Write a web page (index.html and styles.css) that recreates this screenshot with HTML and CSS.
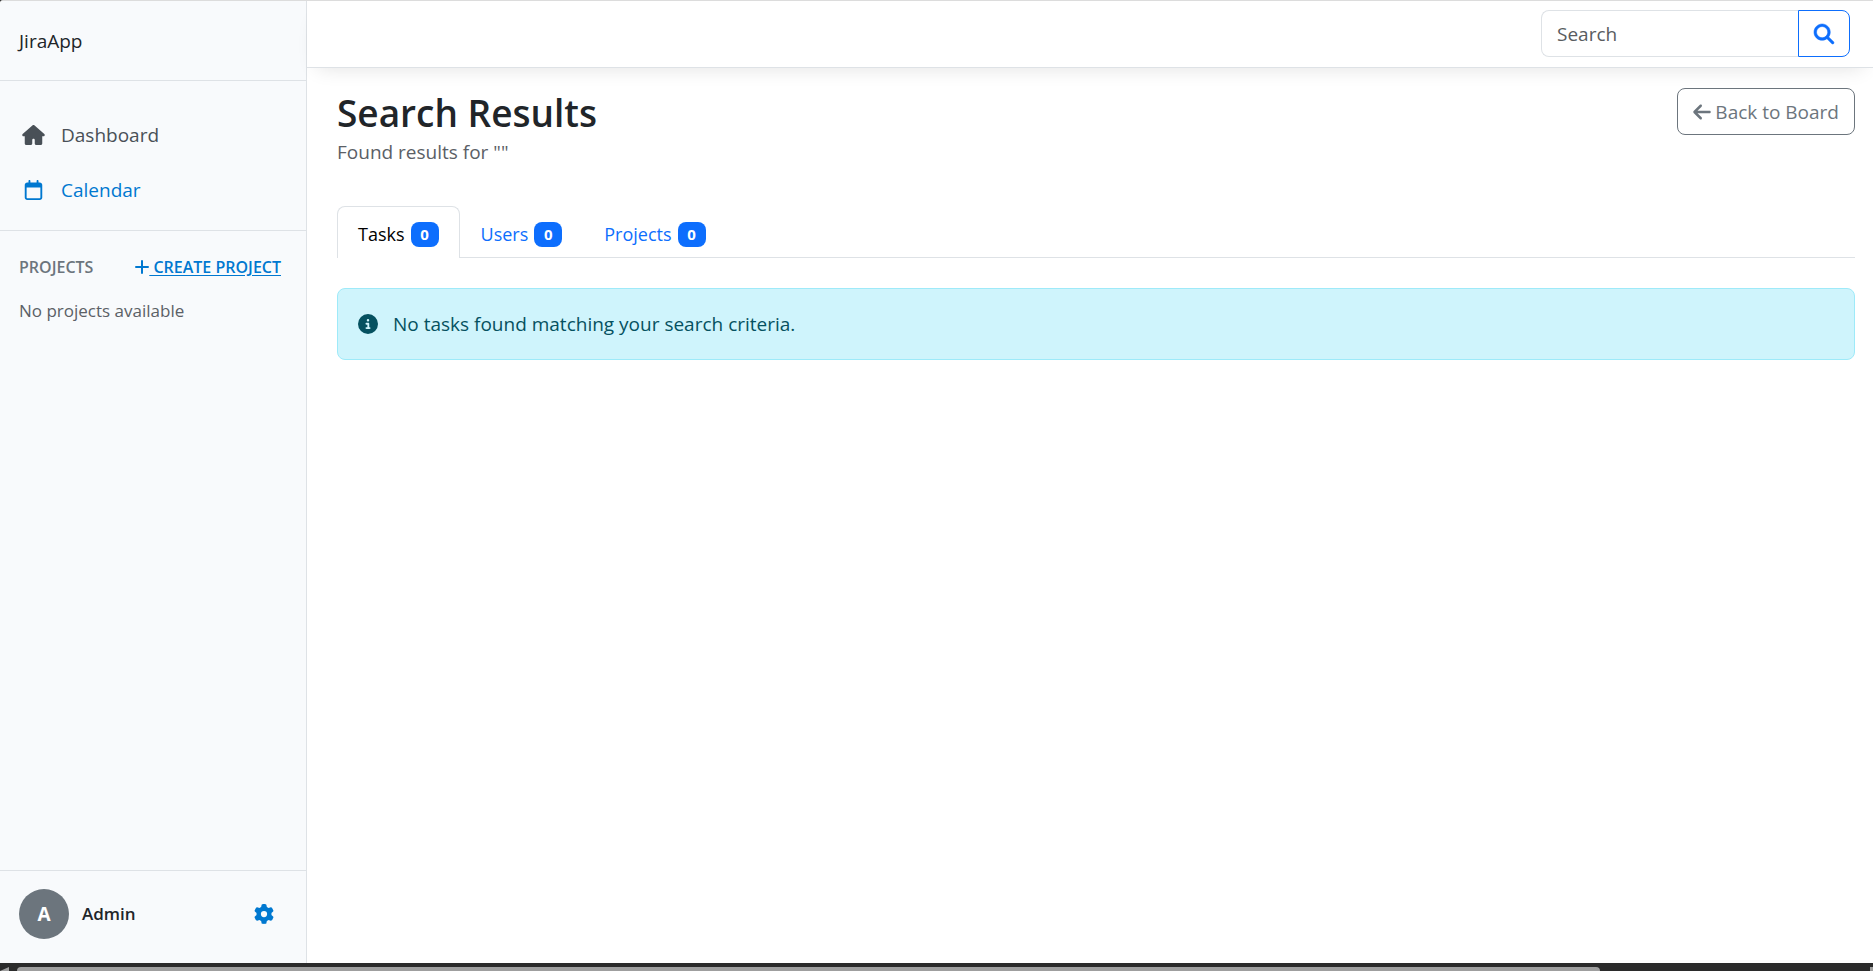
FILE: index.html
```html
<!DOCTYPE html>
<html lang="en">
<head>
<meta charset="utf-8">
<title>Search Results - JiraApp</title>
<link rel="stylesheet" href="styles.css">
</head>
<body>
<div class="app">
  <aside class="sidebar">
    <div class="brand">JiraApp</div>
    <nav class="nav">
      <a class="nav-link" href="#">
        <svg class="nav-icon" viewBox="0 0 576 512"><path d="M575.8 255.5c0 18-15 32.1-32 32.1h-32l.7 160.2c0 2.700-.2 5.400-.5 8.100V472c0 22.100-17.900 40-40 40H360c-22.100 0-40-17.900-40-40v-88c0-17.700-14.300-32-32-32s-32 14.300-32 32v88c0 22.100-17.900 40-40 40H104c-22.100 0-40-17.900-40-40V287.600H32c-18 0-32-14-32-32.100 0-9 3-17 10-24L266.400 8c7-7 15-8 22-8s15 2 21 7l255.400 224.500c8 7 12 15 11 24z"/></svg>
        Dashboard
      </a>
      <a class="nav-link active" href="#">
        <svg class="nav-icon" viewBox="0 0 576 512"><path d="M184 0c13.300 0 24 10.700 24 24v40h160V24c0-13.300 10.700-24 24-24s24 10.700 24 24v40h32c35.300 0 64 28.700 64 64v320c0 35.300-28.700 64-64 64H128c-35.300 0-64-28.700-64-64V128c0-35.300 28.700-64 64-64h32V24c0-13.300 10.700-24 24-24zM112 192v256c0 8.800 7.200 16 16 16h320c8.800 0 16-7.200 16-16V192H112z"/></svg>
        Calendar
      </a>
    </nav>
    <section class="projects">
      <div class="projects-head">
        <h2 class="projects-title">PROJECTS</h2>
        <a class="create" href="#"><svg class="plus" viewBox="0 0 14 14"><path d="M7 1v12M1 7h12"/></svg><span class="create-text">&nbsp;CREATE PROJECT</span></a>
      </div>
      <p class="empty">No projects available</p>
    </section>
    <footer class="account">
      <span class="avatar">A</span>
      <span class="account-name">Admin</span>
      <button class="settings" type="button" aria-label="Settings">
        <svg class="icon" viewBox="0 0 512 512"><path d="M495.900 166.600c3.200 8.700.5 18.400-6.400 24.600l-43.300 39.400c1.100 8.300 1.700 16.800 1.700 25.400s-.6 17.100-1.700 25.400l43.300 39.400c6.900 6.200 9.600 15.900 6.400 24.600-4.400 11.900-9.700 23.300-15.800 34.300l-4.700 8.100c-6.600 11-14 21.400-22.100 31.200-5.900 7.200-15.700 9.600-24.500 6.800l-55.700-17.700c-13.400 10.300-28.200 18.900-44 25.400l-12.500 57.100c-2 9.100-9 16.300-18.200 17.800-13.800 2.300-28 3.500-42.500 3.500s-28.700-1.200-42.500-3.500c-9.200-1.500-16.200-8.700-18.200-17.800l-12.500-57.100c-15.800-6.500-30.600-15.100-44-25.400l-55.600 17.800c-8.800 2.800-18.600.3-24.500-6.800-8.100-9.800-15.500-20.200-22.100-31.200l-4.700-8.100c-6.100-11-11.400-22.400-15.800-34.300-3.200-8.700-.5-18.400 6.400-24.600l43.300-39.400C64.600 273.100 64 264.600 64 256s.6-17.100 1.700-25.400l-43.300-39.400c-6.900-6.200-9.600-15.900-6.400-24.600 4.400-11.900 9.700-23.300 15.800-34.300l4.700-8.100c6.600-11 14-21.400 22.100-31.200 5.900-7.200 15.700-9.600 24.500-6.800l55.700 17.700c13.400-10.300 28.200-18.900 44-25.400l12.500-57.100c2-9.100 9-16.300 18.200-17.800C227.300 1.200 241.500 0 256 0s28.700 1.200 42.500 3.500c9.200 1.500 16.200 8.700 18.200 17.800l12.500 57.100c15.800 6.500 30.600 15.100 44 25.400l55.700-17.700c8.800-2.800 18.600-.3 24.500 6.800 8.100 9.800 15.500 20.200 22.100 31.200l4.700 8.100c6.100 11 11.400 22.400 15.800 34.300zM256 336a80 80 0 1 0 0-160 80 80 0 1 0 0 160z"/></svg>
      </button>
    </footer>
  </aside>
  <div class="page">
    <header class="topbar">
      <form class="search">
        <input class="search-input" type="search" placeholder="Search" aria-label="Search">
        <button class="search-button" type="button" aria-label="Submit search">
          <svg class="icon" viewBox="0 0 512 512"><path stroke="currentColor" stroke-width="14" d="M416 208c0 45.900-14.900 88.300-40 122.700l126.600 126.700c12.500 12.500 12.500 32.800 0 45.300s-32.800 12.500-45.300 0L330.700 376c-34.400 25.200-76.800 40-122.700 40C93.100 416 0 322.900 0 208S93.100 0 208 0s208 93.100 208 208zM208 352a144 144 0 1 0 0-288 144 144 0 1 0 0 288z"/></svg>
        </button>
      </form>
    </header>
    <main class="content">
      <div class="heading">
        <div>
          <h1 class="title">Search Results</h1>
          <p class="subtitle">Found results for ""</p>
        </div>
        <a class="back" href="#"><svg class="back-icon" viewBox="0 0 448 512"><path d="M9.400 233.400c-12.500 12.500-12.500 32.800 0 45.300l160 160c12.500 12.500 32.800 12.500 45.300 0s12.500-32.800 0-45.300L109.200 288H416c17.700 0 32-14.300 32-32s-14.300-32-32-32H109.300l105.300-105.400c12.500-12.500 12.500-32.800 0-45.300s-32.800-12.500-45.300 0l-160 160z"/></svg>Back to Board</a>
      </div>
      <div class="tabs" role="tablist">
        <button class="tab selected" type="button" role="tab" aria-selected="true">Tasks<span class="badge">0</span></button>
        <button class="tab" type="button" role="tab" aria-selected="false">Users<span class="badge">0</span></button>
        <button class="tab" type="button" role="tab" aria-selected="false">Projects<span class="badge">0</span></button>
      </div>
      <div class="alert" role="alert">
        <svg class="icon" viewBox="0 0 512 512"><path d="M256 512a256 256 0 1 0 0-512 256 256 0 1 0 0 512zM216 336h24v-64h-24c-13.300 0-24-10.700-24-24s10.700-24 24-24h48c13.300 0 24 10.700 24 24v88h8c13.300 0 24 10.700 24 24s-10.700 24-24 24h-80c-13.300 0-24-10.700-24-24s10.700-24 24-24zm40-208a32 32 0 1 1 0 64 32 32 0 1 1 0-64z"/></svg>
        No tasks found matching your search criteria.
      </div>
    </main>
  </div>
</div>
<div class="scrollbar"><span class="scroll-arrow"></span><span class="scroll-thumb"></span><span class="scroll-end"></span></div>
</body>
</html>
```
FILE: styles.css
```css
* { box-sizing: border-box; }

body {
  margin: 0;
  height: 100vh;
  display: flex;
  flex-direction: column;
  overflow: hidden;
  background: #2b2b2b;
  color: #212529;
  font-family: "Open Sans", "Noto Sans", sans-serif;
  font-size: 19px;
  line-height: 30px;
}

h1, h2, p { margin: 0; }
a { color: inherit; text-decoration: none; }
button, input { font: inherit; }
svg { flex: none; fill: currentColor; overflow: visible; }
.icon { width: 20px; height: 20px; }

.app {
  flex: 1;
  min-height: 0;
  display: flex;
  background: #fff;
  border-top: 1px solid #dcdcdc;
  border-top-left-radius: 3px;
}

.sidebar {
  flex: none;
  width: 307px;
  display: flex;
  flex-direction: column;
  background: #f8fafc;
  border-right: 1px solid #dee2e6;
  border-top-left-radius: 3px;
}

.brand {
  height: 80px;
  padding: 25px 19px;
  border-bottom: 1px solid #dee2e6;
}

.nav {
  padding: 26px 0 13px;
  border-bottom: 1px solid #dee2e6;
}

.nav-link {
  display: flex;
  align-items: center;
  gap: 16px;
  height: 55px;
  padding: 0 22px;
  color: #495057;
}
.nav-link.active { color: #0078d0; }
.nav-icon { width: 23px; height: 20px; }

.projects { flex: 1; padding: 21px 19px; }

.projects-head {
  display: flex;
  align-items: center;
  justify-content: space-between;
  padding-right: 6px;
  font-size: 16px;
  font-weight: 600;
}
.projects-title { font-size: 16px; font-weight: 600; color: #6c757d; }
.create { display: flex; align-items: center; color: #0078d0; }
.plus { width: 14px; height: 14px; fill: none; stroke: currentColor; stroke-width: 2; stroke-linecap: round; }
.create-text { text-decoration: underline; text-underline-offset: 2px; }
.empty { margin-top: 14px; font-size: 17px; color: #5b6066; }

.account {
  display: flex;
  align-items: center;
  gap: 13px;
  padding: 18px 32px 24px 19px;
  border-top: 1px solid #dee2e6;
}
.avatar {
  width: 50px;
  height: 50px;
  display: grid;
  place-items: center;
  border-radius: 50%;
  background: #6c757d;
  color: #fff;
  font-weight: 700;
}
.account-name { flex: 1; font-size: 17px; font-weight: 600; }
.settings { display: flex; padding: 0; border: 0; background: none; color: #0078d0; }

.page { flex: 1; min-width: 0; }

.topbar {
  display: flex;
  justify-content: flex-end;
  padding: 9px 23px 10px;
  border-bottom: 1px solid #dee2e6;
  box-shadow: 0 10px 20px -10px rgba(0, 0, 0, 0.12);
}
.search { display: flex; }
.search-input {
  width: 257px;
  height: 47px;
  padding: 0 15px;
  border: 1px solid #dee2e6;
  border-right: 0;
  border-radius: 8px 0 0 8px;
  background: #fff;
}
.search-input::placeholder { color: #595c5f; opacity: 1; }
.search-button {
  width: 52px;
  display: grid;
  place-items: center;
  padding: 0;
  border: 1px solid #0d6efd;
  border-radius: 0 8px 8px 0;
  background: #fff;
  color: #0d6efd;
}

.content { padding: 20px 18px 20px 30px; }

.heading {
  display: flex;
  align-items: flex-start;
  justify-content: space-between;
}
.title { font-size: 37px; font-weight: 600; line-height: 50px; }
.subtitle { color: #5b6066; line-height: 28px; }
.back {
  display: flex;
  align-items: center;
  gap: 4px;
  height: 47px;
  padding: 0 15px;
  border: 1px solid #6c757d;
  border-radius: 8px;
  color: #6c757d;
}
.back-icon { width: 18px; height: 20px; }

.tabs {
  display: flex;
  margin-top: 40px;
  border-bottom: 1px solid #dee2e6;
}
.tab {
  display: flex;
  align-items: center;
  gap: 6px;
  height: 52px;
  margin-bottom: -1px;
  padding: 3px 20px 0;
  border: 1px solid transparent;
  border-bottom: 0;
  border-radius: 8px 8px 0 0;
  background: none;
  color: #0d6efd;
  font-size: 18px;
}
.tab.selected { border-color: #dee2e6; background: #fff; color: #000; }
.badge {
  width: 28px;
  border-radius: 8px;
  background: #0d6efd;
  color: #fff;
  font-size: 15px;
  font-weight: 700;
  line-height: 25px;
  text-align: center;
}

.alert {
  display: flex;
  align-items: center;
  gap: 15px;
  margin-top: 30px;
  padding: 20px;
  border: 1px solid #9eeaf9;
  border-radius: 8px;
  background: #cff4fc;
  color: #055160;
}

.scrollbar {
  flex: none;
  display: flex;
  height: 8px;
  padding-top: 4px;
  background: #2b2b2b;
}
.scroll-arrow { width: 9px; margin-right: 8px; background: #9f9f9f; clip-path: polygon(100% 0, 100% 100%, 0 100%); }
.scroll-thumb { width: 1583px; max-width: 85%; border-radius: 4px 4px 0 0; background: #9f9f9f; }
.scroll-end { width: 3px; margin-left: auto; background: #9f9f9f; }
```
